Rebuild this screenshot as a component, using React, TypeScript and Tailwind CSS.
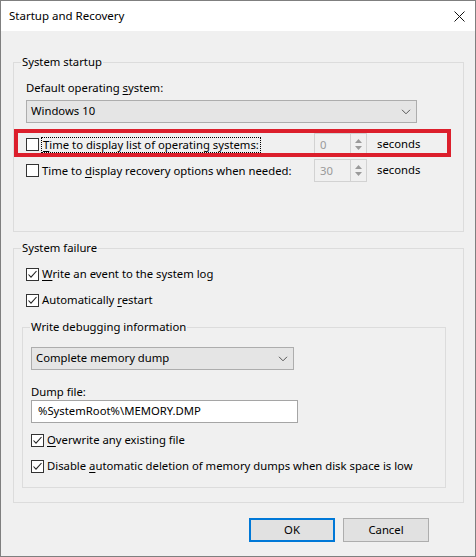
import React from 'react';

const font = { fontFamily: '"Noto Sans", "Liberation Sans", sans-serif' };

const Check = ({ checked }: { checked?: boolean }) => (
  <span className="w-[13px] h-[13px] border border-[#333] bg-white flex items-center justify-center shrink-0">
    {checked && (
      <svg width="11" height="11" viewBox="0 0 11 11">
        <polyline points="1.5,5.5 4,8.2 9.5,2" fill="none" stroke="#222" strokeWidth="1.1" />
      </svg>
    )}
  </span>
);

const Chevron = () => (
  <svg width="10" height="6" viewBox="0 0 10 6">
    <polyline points="1,0.8 5,4.8 9,0.8" fill="none" stroke="#555" strokeWidth="1" />
  </svg>
);

const Spinner = ({ value }: { value: string }) => (
  <div className="w-[53px] h-[23px] border border-[#d2d2d2] bg-[#f0f0f0] flex">
    <span className="flex-1 pl-[5px] text-[#9a9a9a] leading-[21px]">{value}</span>
    <div className="w-[16px] border-l border-[#d2d2d2] flex flex-col items-center justify-center gap-[3px]">
      <svg width="7" height="4" viewBox="0 0 7 4"><polygon points="0,4 3.5,0 7,4" fill="#9a9a9a" /></svg>
      <svg width="7" height="4" viewBox="0 0 7 4"><polygon points="0,0 3.5,4 7,0" fill="#9a9a9a" /></svg>
    </div>
  </div>
);

const Row = ({ checked, children }: { checked?: boolean; children: React.ReactNode }) => (
  <div className="flex items-center gap-[3px] h-[16px]">
    <Check checked={checked} />
    <span className="leading-[16px]">{children}</span>
  </div>
);

const Select = ({ text, width }: { text: string; width: string }) => (
  <div className={`${width} h-[23px] border border-[#adadad] bg-[#e5e5e5] flex items-center justify-between pl-[4px] pr-[5px]`}>
    <span>{text}</span>
    <Chevron />
  </div>
);

export default function App() {
  return (
    <div style={font} className="w-[476px] h-[557px] bg-[#f0f0f0] border border-[#7f7f7f] text-[11.3px] text-black flex flex-col overflow-hidden">
      <div className="h-[30px] bg-white flex items-center justify-between pl-[8px] pr-[10px] shrink-0">
        <span className="text-[11.5px]">Startup and Recovery</span>
        <svg width="11" height="11" viewBox="0 0 11 11">
          <path d="M0.5 0.5 L10.5 10.5 M10.5 0.5 L0.5 10.5" stroke="#111" strokeWidth="1" />
        </svg>
      </div>

      <div className="pt-[23px] px-[12px]">
        <fieldset className="border border-[#dcdcdc] w-[451px]">
          <legend className="ml-[7px] px-[1px] leading-[16px]">System startup</legend>
          <div className="pl-[12px] pt-[10px] pb-[49px]">
            <div className="leading-[16px]">Default operating <u className="underline-offset-2">s</u>ystem:</div>
            <div className="mt-[4px]">
              <Select text="Windows 10" width="w-[391px]" />
            </div>
            <div className="relative mt-[10px] grid grid-cols-[288px_53px_auto] items-center h-[23px]">
              <div className="flex items-center gap-[2px]">
                <Check />
                <span className="border border-dotted border-black leading-[14px] px-[1px]">
                  <u className="underline-offset-2">T</u>ime to display list of operating systems:
                </span>
              </div>
              <Spinner value="0" />
              <span className="ml-[10px]">seconds</span>
              <div className="absolute left-[-12px] top-[-4px] w-[437px] h-[28px] border-[4px] border-[#dc1f2c]" />
            </div>
            <div className="mt-[3px] grid grid-cols-[288px_53px_auto] items-center h-[23px]">
              <Row>
                Time to <u className="underline-offset-2">d</u>isplay recovery options when needed:
              </Row>
              <Spinner value="30" />
              <span className="ml-[10px]">seconds</span>
            </div>
          </div>
        </fieldset>

        <fieldset className="mt-[8px] border border-[#dcdcdc] w-[451px]">
          <legend className="ml-[7px] px-[1px] leading-[16px]">System failure</legend>
          <div className="pl-[12px] pt-[10px] flex flex-col gap-[10px]">
            <Row checked>
              <u className="underline-offset-2">W</u>rite an event to the system log
            </Row>
            <Row checked>
              Automatically <u className="underline-offset-2">r</u>estart
            </Row>
          </div>
          <fieldset className="ml-[8px] mt-[11px] mb-[14px] border border-[#dcdcdc] w-[424px]">
            <legend className="ml-[7px] px-[1px] leading-[16px]">Write debugging information</legend>
            <div className="pl-[8px] pt-[12px] pb-[13px]">
              <Select text="Complete memory dump" width="w-[263px]" />
              <div className="mt-[14px] leading-[16px]">Dump file:</div>
              <div className="w-[267px] h-[23px] border border-[#a5a5a5] bg-white flex items-center pl-[6px]">
                %SystemRoot%\MEMORY.DMP
              </div>
              <div className="mt-[9px] flex flex-col gap-[10px]">
                <Row checked>
                  <u className="underline-offset-2">O</u>verwrite any existing file
                </Row>
                <Row checked>
                  Disable <u className="underline-offset-2">a</u>utomatic deletion of memory dumps when disk space is low
                </Row>
              </div>
            </div>
          </fieldset>
        </fieldset>

        <div className="mt-[15px] flex justify-end gap-[8px] pr-[34px]">
          <button className="w-[86px] h-[24px] border-2 border-[#0078d7] bg-[#e1e1e1]">OK</button>
          <button className="w-[86px] h-[24px] border border-[#adadad] bg-[#e1e1e1]">Cancel</button>
        </div>
      </div>
    </div>
  );
}
